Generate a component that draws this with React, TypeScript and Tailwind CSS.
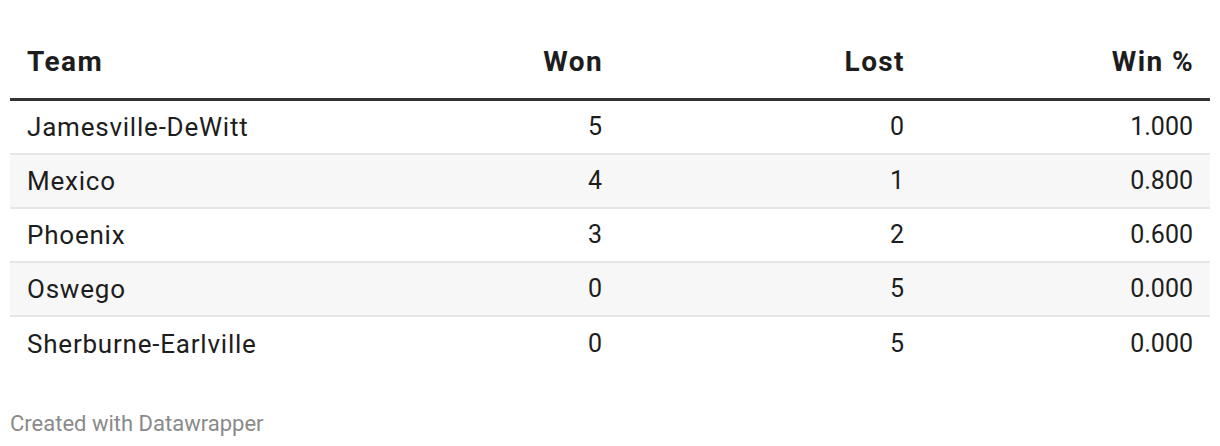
import React from "react"

const rows = [
  { team: "Jamesville-DeWitt", won: "5", lost: "0", pct: "1.000" },
  { team: "Mexico", won: "4", lost: "1", pct: "0.800" },
  { team: "Phoenix", won: "3", lost: "2", pct: "0.600" },
  { team: "Oswego", won: "0", lost: "5", pct: "0.000" },
  { team: "Sherburne-Earlville", won: "0", lost: "5", pct: "0.000" },
]

const cols = "grid grid-cols-[307px_302px_302px_289px]"

const App: React.FC = () => {
  return (
    <div className="w-[1220px] h-[446px] bg-white px-[10px] pt-[30px] font-['Roboto',sans-serif] text-[#1d1d1d]">
      <div className={`${cols} h-[71px] pb-[4px] items-center border-b-[3px] border-[#333333] text-[28px] font-bold tracking-[0.05em]`}>
        <div className="pl-[17px]">Team</div>
        <div className="text-right pr-[16px]">Won</div>
        <div className="text-right pr-[16px]">Lost</div>
        <div className="text-right pr-[16px]">Win %</div>
      </div>
      {rows.map((r, i) => (
        <div
          key={r.team}
          className={`${cols} h-[54px] items-center text-[25px] ${i % 2 === 1 ? "bg-[#f7f7f7]" : "bg-white"} ${i < rows.length - 1 ? "border-b-2 border-[#e6e6e6]" : ""}`}
        >
          <div className="pl-[17px] text-[26px] tracking-[0.03em]">{r.team}</div>
          <div className="text-right pr-[17px]">{r.won}</div>
          <div className="text-right pr-[17px]">{r.lost}</div>
          <div className="text-right pr-[17px]">{r.pct}</div>
        </div>
      ))}
      <div className="mt-[36px] text-[22px] text-[#8a8a8a]">Created with Datawrapper</div>
    </div>
  )
}

export default App
